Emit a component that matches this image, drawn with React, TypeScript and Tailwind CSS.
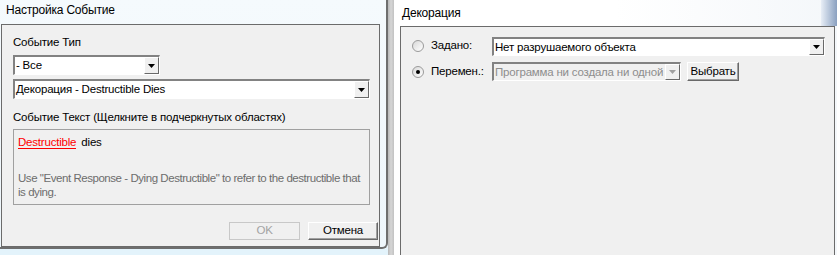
import React from 'react';

const font = { fontFamily: '"Liberation Sans", "Noto Sans", Arial, sans-serif' };

// base text size used across both dialogs (Segoe-like width)
const txt = 'text-[11.5px] tracking-[-0.2px]';

function Arrow({ disabled }: { disabled?: boolean }) {
  return (
    <div className="w-[15px] h-full bg-[#f0f0f0] border border-t-white border-l-white border-b-[#696969] border-r-[#696969] flex items-center justify-center">
      <svg width="7" height="4" viewBox="0 0 7 4">
        <path d="M0 0h7L3.5 4z" fill={disabled ? '#a0a0a0' : '#000'} />
      </svg>
    </div>
  );
}

function Select({ text, className, disabled }: { text: string; className: string; disabled?: boolean }) {
  return (
    <div
      className={`flex items-stretch border-t-2 border-l-2 border-b border-r border-t-[#828282] border-l-[#828282] border-b-white border-r-white ${disabled ? 'bg-[#f0f0f0]' : 'bg-white'} ${className}`}
    >
      <div className={`flex-1 pl-[1px] ${txt} leading-[16px] whitespace-nowrap overflow-hidden ${disabled ? 'text-[#8d8d8d]' : 'text-black'}`}>
        {text}
      </div>
      <Arrow disabled={disabled} />
    </div>
  );
}

function Radio({ checked }: { checked?: boolean }) {
  return (
    <div className="w-[12px] h-[12px] rounded-full border border-[#9a9a9a] bg-gradient-to-br from-[#d8d8d8] to-white flex items-center justify-center">
      {checked && <div className="w-[4px] h-[4px] rounded-full bg-black" />}
    </div>
  );
}

function Button({ label, className, disabled }: { label: string; className: string; disabled?: boolean }) {
  return (
    <div
      className={`flex items-center justify-center ${txt} border ${disabled ? 'border-[#c8c8c8] text-[#a3a3a3] bg-[#f0f0f0]' : 'border-t-white border-l-white border-b-[#696969] border-r-[#696969] text-black bg-[#f0f0f0] shadow-[inset_-1px_-1px_0_#a0a0a0]'} ${className}`}
    >
      {label}
    </div>
  );
}

export default function App() {
  return (
    <div className="w-[837px] h-[255px] overflow-hidden flex bg-[#e8f4fb]" style={font}>
      {/* Left dialog */}
      <div className="w-[388px] h-[255px] flex flex-col">
        <div className="h-[249px] flex flex-col bg-gradient-to-b from-[#f5fafd] to-[#eef6fb] border-r-[2px] border-b-[2px] border-[#6e6e6e] rounded-br-[6px]">
          <div className="h-[24px] pl-[6px] pt-[3px] text-[12px] tracking-[-0.2px] leading-[15px] text-black">Настройка Событие</div>
          <div className="ml-[1px] w-[379px] h-[223px] bg-[#f0f0f0] border border-[#6b6b6b] pl-[11px] pt-[10px] flex flex-col">
            <div className={`${txt} leading-[14px] text-black`}>Событие Тип</div>
            <Select text="- Все" className="mt-[6px] w-[147px] h-[20px]" />
            <Select text="Декорация - Destructible Dies" className="mt-[4px] w-[357px] h-[20px]" />
            <div className={`mt-[11px] ${txt} leading-[14px] text-black`}>Событие Текст (Щелкните в подчеркнутых областях)</div>
            <div className="mt-[5px] w-[357px] h-[76px] border border-[#a0a0a0] px-[4px] pt-[5px] flex flex-col">
              <div className={`${txt} leading-[14px]`}>
                <span className="text-[#ff0000] border-b border-[#ff0000]">Destructible</span>
                <span className="text-black ml-[5px]">dies</span>
              </div>
              <div className="mt-[22px] text-[11.5px] leading-[14px] text-[#6d6d6d] tracking-[-0.45px]">
                Use "Event Response - Dying Destructible" to refer to the destructible that is dying.
              </div>
            </div>
            <div className="mt-[17px] flex gap-[8px] ml-[216px]">
              <Button label="OK" disabled className="w-[71px] h-[18px]" />
              <Button label="Отмена" className="w-[70px] h-[18px]" />
            </div>
          </div>
        </div>
        <div className="flex-1 bg-[#e3f3fb]" />
      </div>

      {/* Right dialog */}
      <div className="flex-1 h-[255px] flex">
        <div className="w-[6px] h-full bg-gradient-to-r from-[#b8b8b8] via-[#d6d6d6] to-[#c2c2c2]" />
        <div className="flex-1 h-full flex flex-col bg-gradient-to-r from-white via-white to-[#f4f7fa]">
          <div className="h-[26px] pl-[8px] pt-[6px] text-[12px] tracking-[-0.2px] leading-[15px] text-black flex">
            <span>Декорация</span>
            <div className="ml-auto w-[16px] h-[26px] -mt-[6px] bg-gradient-to-r from-[#e8eef6] to-[#8aa0c0]" />
          </div>
          <div className="ml-[6px] mr-[2px] flex-1 bg-[#f0f0f0] border-l border-t border-r border-[#6b6b6b] pt-[10px] pl-[11px] flex flex-col gap-[7px]">
            <div className="flex items-center h-[18px]">
              <Radio />
              <span className={`ml-[7px] w-[61px] ${txt} text-black`}>Задано:</span>
              <Select text="Нет разрушаемого объекта" className="w-[333px] h-[19px]" />
            </div>
            <div className="flex items-center h-[19px]">
              <Radio checked />
              <span className={`ml-[7px] w-[61px] ${txt} text-black`}>Перемен.:</span>
              <Select text="Программа ни создала ни одной" disabled className="w-[189px] h-[19px]" />
              <Button label="Выбрать" className="ml-[6px] w-[52px] h-[19px]" />
            </div>
          </div>
        </div>
      </div>
    </div>
  );
}
